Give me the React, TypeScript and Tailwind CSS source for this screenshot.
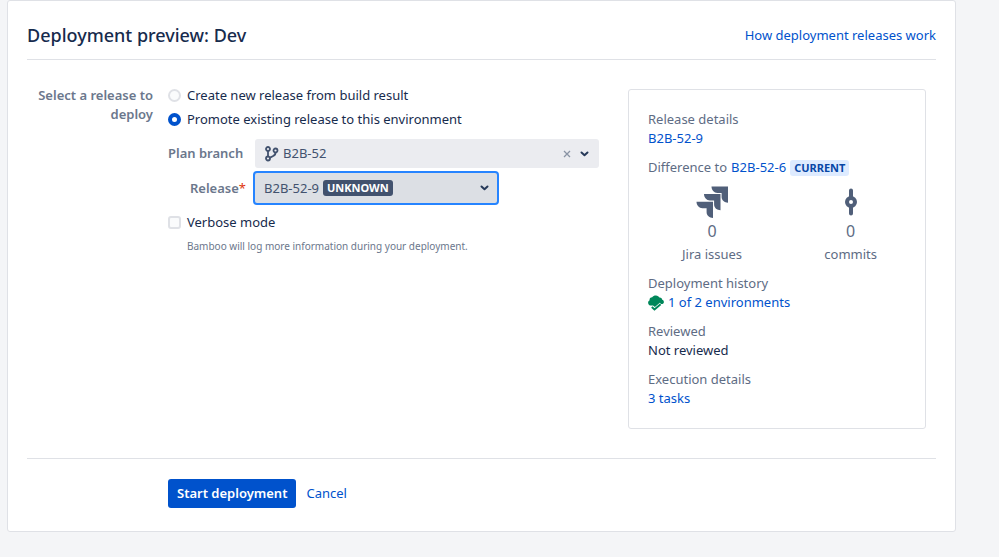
import React, { useState } from 'react';

interface DetailProps {
  title: string;
  children: React.ReactNode;
}

const linkClass = "text-[#0052cc] hover:underline";

const BranchIcon = () => (
  <svg className="absolute left-[10px] top-[7px] pointer-events-none" width="14" height="16" viewBox="0 0 14 16" fill="none" stroke="#42526e" strokeWidth="1.8">
    <circle cx="3" cy="3" r="2" />
    <circle cx="3" cy="12.500" r="2" />
    <circle cx="10.500" cy="4.500" r="2" />
    <path d="M3 5v5.500M10.500 6.500c0 3-2 3.500-5.500 5" />
  </svg>
);

const Chevron = () => (
  <svg className="absolute right-[10px] top-1/2 -translate-y-1/2 pointer-events-none" width="9" height="6" viewBox="0 0 9 6" fill="none" stroke="#253858" strokeWidth="2" strokeLinecap="round" strokeLinejoin="round">
    <path d="M1.500 1.500l3 2.700 3-2.700" />
  </svg>
);

const JiraIcon = () => (
  <svg width="32" height="32" viewBox="0 0 32 32" fill="#505f79">
    <path d="M15.500.5H32v16.200c-3.400 0-6.400-2.300-6.400-5.700V7h-4.200c-3.300 0-5.900-3-5.900-6.500z" />
    <path d="M8 8.100h16.500v16.200c-3.400 0-6.400-2.300-6.400-5.700v-4h-4.200C10.600 14.600 8 11.600 8 8.100z" />
    <path d="M.5 15.700H17v16.200c-3.400 0-6.400-2.300-6.400-5.700v-4H6.400C3.100 22.200.5 19.200.5 15.700z" />
  </svg>
);

const CommitIcon = () => (
  <svg width="14" height="32" viewBox="0 0 14 32" fill="none" stroke="#505f79">
    <path d="M7 4.500v7M7 20.500v7" strokeWidth="4" strokeLinecap="round" />
    <circle cx="7" cy="16" r="4" strokeWidth="4" />
  </svg>
);

const DeployedIcon = () => (
  <svg width="16" height="16" viewBox="0 0 16 16">
    <path fill="#00875a" d="M3.200 10.500A3 3 0 0 1 .1 7.700c0-1.200.7-2 1.500-2.400C1.200 3.400 2.600 2.200 4.200 2.200 5 .9 6.500.3 8 .4c1.600.1 2.800.9 3.400 2.100 1.500-.2 2.700.8 2.800 2.200 1 .3 1.700 1.100 1.700 2.200 0 1-.6 1.800-1.500 2.100l-1.400.1-1.200-1.300-4.900 4.200L5 10.500z" />
    <path fill="none" stroke="#00875a" strokeWidth="1.900" d="M3.800 12l2.700 2.500L12.600 9.200" />
  </svg>
);

const Detail = ({ title, children }: DetailProps) => (
  <div className="mt-[10px]">
    <h3 className="text-[#5e6c84]">{title}</h3>
    <div className="flex items-center gap-1">{children}</div>
  </div>
);

const App = () => {
  const [mode, setMode] = useState('promote');
  const [branch, setBranch] = useState('B2B-52');
  const [release, setRelease] = useState('B2B-52-9');
  const [verbose, setVerbose] = useState(false);

  const radioClass = "appearance-none shrink-0 size-[13px] rounded-full border-2 border-[#dfe1e6] bg-[#fafbfc] checked:border-4 checked:border-[#0052cc] checked:bg-white";

  return (
    <div className="min-h-screen bg-[#f4f5f7] pl-[7px] pr-[43px] pb-6 font-['Noto_Sans',sans-serif] text-[13px] leading-[19px] text-[#172b4d]">
      <main className="bg-white border border-[#dfe1e6] rounded-[3px] px-[19px] pb-[23px]">

        {/* HEADER */}
        <header className="flex items-center justify-between h-[59px] pt-[10px] border-b border-[#dfe1e6]">
          <h1 className="text-lg leading-6 font-medium">Deployment preview: Dev</h1>
          <a href="#help" className={linkClass}>How deployment releases work</a>
        </header>

        <form onSubmit={(e) => e.preventDefault()}>
          <div className="flex items-start pt-[26px] pb-[29px] pr-[10px]">

            {/* RELEASE SELECTION */}
            <fieldset className="flex flex-1 min-w-0 gap-[15px]">
              <legend className="float-left w-[126px] text-right font-semibold text-[#6b778c]">Select a release to deploy</legend>
              <div className="flex-1 min-w-0 mt-[3px] pr-[29px]">
                <label className="flex items-center gap-[6px] h-3">
                  <input type="radio" name="mode" className={radioClass} checked={mode === 'create'} onChange={() => setMode('create')} />
                  Create new release from build result
                </label>
                <label className="flex items-center gap-[6px] h-3 mt-3">
                  <input type="radio" name="mode" className={radioClass} checked={mode === 'promote'} onChange={() => setMode('promote')} />
                  Promote existing release to this environment
                </label>

                <div className="flex items-center mt-[14px]">
                  <label htmlFor="branch" className="w-[73px] font-semibold text-[#6b778c] whitespace-nowrap">Plan branch</label>
                  <div className="relative flex-1 ml-[14px]">
                    <select id="branch" value={branch} onChange={(e) => setBranch(e.target.value)}
                      className="block appearance-none w-full h-[29px] pl-7 rounded-[3px] bg-[#ebecf0] text-[#42526e] outline-none">
                      <option value=""></option>
                      <option>B2B-52</option>
                    </select>
                    <BranchIcon />
                    <button type="button" aria-label="Clear" onClick={() => setBranch('')} className="absolute right-7 top-[11px] text-[#8993a4]">
                      <svg width="8" height="8" viewBox="0 0 8 8" stroke="currentColor" strokeWidth="1.300"><path d="M1 1l6 6M7 1L1 7" /></svg>
                    </button>
                    <Chevron />
                  </div>
                </div>

                <div className="flex items-center mt-[3px]">
                  <label htmlFor="release" className="w-[78px] text-right font-semibold text-[#6b778c]">Release<span className="font-normal text-[#de350b]">*</span></label>
                  <div className="relative w-[246px] ml-[7px]">
                    <select id="release" value={release} onChange={(e) => setRelease(e.target.value)}
                      className="block appearance-none w-full h-[34px] pl-[9px] rounded-[4px] border-2 border-[#2684ff] bg-[#dcdfe4] text-[#42526e] outline-none">
                      <option>B2B-52-9</option>
                    </select>
                    <span className="absolute left-[70px] top-[9px] px-1 h-4 rounded-[3px] bg-[#42526e] text-white text-[11px] leading-4 font-bold pointer-events-none">UNKNOWN</span>
                    <Chevron />
                  </div>
                </div>

                <label className="flex items-center gap-[6px] mt-2">
                  <input type="checkbox" checked={verbose} onChange={(e) => setVerbose(e.target.checked)} aria-describedby="verbose-help"
                    className="appearance-none shrink-0 size-[13px] rounded-[3px] border-2 border-[#dfe1e6] bg-[#fafbfc] checked:bg-[#0052cc]" />
                  Verbose mode
                </label>
                <p id="verbose-help" className="mt-[6px] pl-[19px] text-[10px] leading-4 text-[#6b778c]">Bamboo will log more information during your deployment.</p>
              </div>
            </fieldset>

            {/* DETAILS PANEL */}
            <aside className="w-[298px] shrink-0 mt-[3px] px-[19px] pt-[10px] pb-5 border border-[#dfe1e6] rounded-[3px]">
              <Detail title="Release details">
                <a href="#release" className={linkClass}>B2B-52-9</a>
              </Detail>

              <div className="flex items-center gap-1 mt-[10px] text-[#5e6c84]">
                <span>Difference to</span>
                <a href="#diff" className={linkClass}>B2B-52-6</a>
                <span className="px-1 h-4 rounded-[3px] bg-[#deebff] text-[#0747a6] text-[11px] leading-4 font-bold">CURRENT</span>
              </div>

              <div className="flex justify-between pl-[34px] pr-[29px] mt-[9px] text-[#5e6c84]">
                <div className="flex flex-col items-center">
                  <JiraIcon />
                  <span className="mt-px text-base leading-6">0</span>
                  <span className="mt-0.5">Jira issues</span>
                </div>
                <div className="flex flex-col items-center">
                  <CommitIcon />
                  <span className="mt-px text-base leading-6">0</span>
                  <span className="mt-0.5">commits</span>
                </div>
              </div>

              <Detail title="Deployment history">
                <DeployedIcon />
                <a href="#history" className={linkClass}>1 of 2 environments</a>
              </Detail>
              <Detail title="Reviewed">Not reviewed</Detail>
              <Detail title="Execution details">
                <a href="#tasks" className={linkClass}>3 tasks</a>
              </Detail>
            </aside>
          </div>

          {/* ACTIONS */}
          <div className="flex items-center gap-[10px] pt-5 pl-[141px] border-t border-[#dfe1e6]">
            <button type="submit" className="h-[29px] px-[9px] rounded-[3px] bg-[#0052cc] text-white font-semibold">Start deployment</button>
            <a href="#cancel" className={linkClass}>Cancel</a>
          </div>
        </form>
      </main>
    </div>
  );
};

export default App;
